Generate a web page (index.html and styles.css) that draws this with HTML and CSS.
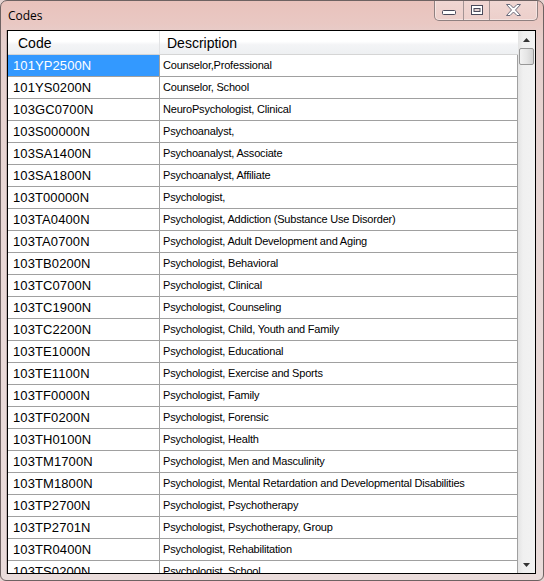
FILE: index.html
```html
<!DOCTYPE html>
<html>
<head>
<meta charset="utf-8">
<link rel="stylesheet" href="styles.css">
</head>
<body>
<div class="window">
  <div class="titlebar">
    <span class="title">Codes</span>
    <div class="caption-buttons">
      <div class="cbtn min"><svg width="14" height="6" viewBox="0 0 14 6"><rect x="0.5" y="0.5" width="13" height="4" rx="1" fill="#fff" stroke="#4a4a5a"/></svg></div>
      <div class="cbtn max"><svg width="12" height="10" viewBox="0 0 12 10"><rect x="0.5" y="0.5" width="11" height="9" fill="#fff" stroke="#4a4a5a"/><rect x="3" y="3.5" width="6" height="3" fill="#e2d0cf" stroke="#4a4a5a"/></svg></div>
      <div class="cbtn close"><svg width="15" height="12" viewBox="0 0 15 12"><path d="M0.5 0.5h3.5l3.5 3.5 3.5-3.5h3.5l-5 5.5 5 5.5h-3.5l-3.5-3.5-3.5 3.5h-3.5l5-5.5z" fill="#fff" stroke="#6a6a7a" stroke-linejoin="round"/></svg></div>
    </div>
  </div>
  <div class="grid">
    <div class="grid-main">
      <div class="header">
        <div class="hc hcode">Code</div>
        <div class="hc hdesc">Description</div>
      </div>
      <div class="rows">
        <div class="row selected"><div class="c code">101YP2500N</div><div class="c desc">Counselor,Professional</div></div>
        <div class="row"><div class="c code">101YS0200N</div><div class="c desc">Counselor, School</div></div>
        <div class="row"><div class="c code">103GC0700N</div><div class="c desc">NeuroPsychologist, Clinical</div></div>
        <div class="row"><div class="c code">103S00000N</div><div class="c desc">Psychoanalyst,</div></div>
        <div class="row"><div class="c code">103SA1400N</div><div class="c desc">Psychoanalyst, Associate</div></div>
        <div class="row"><div class="c code">103SA1800N</div><div class="c desc">Psychoanalyst, Affiliate</div></div>
        <div class="row"><div class="c code">103T00000N</div><div class="c desc">Psychologist,</div></div>
        <div class="row"><div class="c code">103TA0400N</div><div class="c desc">Psychologist, Addiction (Substance Use Disorder)</div></div>
        <div class="row"><div class="c code">103TA0700N</div><div class="c desc">Psychologist, Adult Development and Aging</div></div>
        <div class="row"><div class="c code">103TB0200N</div><div class="c desc">Psychologist, Behavioral</div></div>
        <div class="row"><div class="c code">103TC0700N</div><div class="c desc">Psychologist, Clinical</div></div>
        <div class="row"><div class="c code">103TC1900N</div><div class="c desc">Psychologist, Counseling</div></div>
        <div class="row"><div class="c code">103TC2200N</div><div class="c desc">Psychologist, Child, Youth and Family</div></div>
        <div class="row"><div class="c code">103TE1000N</div><div class="c desc">Psychologist, Educational</div></div>
        <div class="row"><div class="c code">103TE1100N</div><div class="c desc">Psychologist, Exercise and Sports</div></div>
        <div class="row"><div class="c code">103TF0000N</div><div class="c desc">Psychologist, Family</div></div>
        <div class="row"><div class="c code">103TF0200N</div><div class="c desc">Psychologist, Forensic</div></div>
        <div class="row"><div class="c code">103TH0100N</div><div class="c desc">Psychologist, Health</div></div>
        <div class="row"><div class="c code">103TM1700N</div><div class="c desc">Psychologist, Men and Masculinity</div></div>
        <div class="row"><div class="c code">103TM1800N</div><div class="c desc">Psychologist, Mental Retardation and Developmental Disabilities</div></div>
        <div class="row"><div class="c code">103TP2700N</div><div class="c desc">Psychologist, Psychotherapy</div></div>
        <div class="row"><div class="c code">103TP2701N</div><div class="c desc">Psychologist, Psychotherapy, Group</div></div>
        <div class="row"><div class="c code">103TR0400N</div><div class="c desc">Psychologist, Rehabilitation</div></div>
        <div class="row"><div class="c code">103TS0200N</div><div class="c desc">Psychologist, School</div></div>
      </div>
    </div>
    <div class="vscroll">
      <div class="sbtn"><svg width="7" height="4" viewBox="0 0 7 4"><path d="M3.5 0L7 4H0z" fill="#333"/></svg></div>
      <div class="thumb"></div>
      <div class="track"></div>
      <div class="sbtn"><svg width="7" height="4" viewBox="0 0 7 4"><path d="M0 0h7L3.5 4z" fill="#333"/></svg></div>
    </div>
  </div>
</div>
</body>
</html>
```

FILE: styles.css
```css
html, body {
  margin: 0;
  padding: 0;
  background: #e6d3d1;
}
.window {
  width: 544px;
  height: 581px;
  box-sizing: border-box;
  border: 1px solid #6e6262;
  border-radius: 7px 7px 6px 6px;
  background: linear-gradient(180deg, #e9c2bc 0px, #e9c8c3 22px, #e6d0cd 40px, #e8d7d5 200px, #eadcdb 581px);
  padding: 0 7px 6px 6px;
  display: flex;
  flex-direction: column;
  overflow: hidden;
}
.titlebar {
  height: 29px;
  flex: none;
  display: flex;
  justify-content: space-between;
  align-items: flex-start;
}
.title {
  font-family: "Open Sans", sans-serif;
  font-size: 12px;
  color: #000;
  margin-top: 6px;
  margin-left: 1px;
}
.caption-buttons {
  display: flex;
  margin-top: -1px;
  margin-right: -2px;
  height: 20px;
  border: 1px solid #8f8080;
  border-top: none;
  border-radius: 0 0 5px 5px;
  background: linear-gradient(180deg, rgba(255,255,255,0.35), rgba(255,255,255,0.15));
  box-shadow: inset 0 0 0 1px rgba(255,255,255,0.4);
  overflow: hidden;
}
.cbtn {
  display: flex;
  align-items: center;
  justify-content: center;
  height: 20px;
}
.cbtn.min { width: 28px; border-right: 1px solid #a39494; }
.cbtn.min svg { margin-top: 6px; }
.cbtn.max { width: 25px; border-right: 1px solid #a39494; }
.cbtn.close { width: 47px; }

.grid {
  flex: 1;
  display: flex;
  border: 1px solid #000;
  background: #fff;
  overflow: hidden;
  box-shadow: -1px 0 0 rgba(120,100,100,0.35);
}
.grid-main {
  width: 510px;
  flex: none;
  overflow: hidden;
}
.header {
  display: flex;
  height: 23px;
  border-bottom: 1px solid #d5d5d5;
  background: linear-gradient(180deg, #ffffff 0%, #ffffff 45%, #f3f4f6 60%, #eef0f2 100%);
  font-family: "Liberation Sans", Arial, sans-serif;
  font-size: 14px;
  color: #000;
}
.hc {
  line-height: 24px;
  box-sizing: border-box;
}
.hcode {
  width: 152px;
  padding-left: 10px;
  border-right: 1px solid #e2e3e5;
}
.hdesc {
  width: 358px;
  padding-left: 7px;
}
.rows {
  font-family: "Liberation Sans", Arial, sans-serif;
  color: #000;
}
.row {
  display: flex;
  height: 22px;
  box-sizing: border-box;
  border-bottom: 1px solid #a0a0a0;
}
.c {
  box-sizing: border-box;
  line-height: 21px;
  white-space: nowrap;
  overflow: hidden;
  border-right: 1px solid #a0a0a0;
}
.code {
  width: 152px;
  padding-left: 5px;
  font-size: 13px;
  letter-spacing: 0.1px;
}
.desc {
  width: 358px;
  padding-left: 3px;
  font-size: 11px;
  letter-spacing: -0.2px;
}
.row.selected .code {
  background: #3399ff;
  color: #fff;
}
.vscroll {
  width: 17px;
  flex: none;
  display: flex;
  flex-direction: column;
  background: linear-gradient(90deg, #e4e4e4 0%, #f0f0f0 30%, #f2f2f2 100%);
}
.sbtn {
  height: 17px;
  flex: none;
  display: flex;
  align-items: center;
  justify-content: center;
}
.thumb {
  height: 17px;
  margin: 0 1px;
  box-sizing: border-box;
  border: 1px solid #979797;
  border-radius: 2px;
  background: linear-gradient(90deg, #f2f2f2 0%, #e6e6e6 50%, #d4d4d4 100%);
  flex: none;
}
.track {
  flex: 1;
}
```
